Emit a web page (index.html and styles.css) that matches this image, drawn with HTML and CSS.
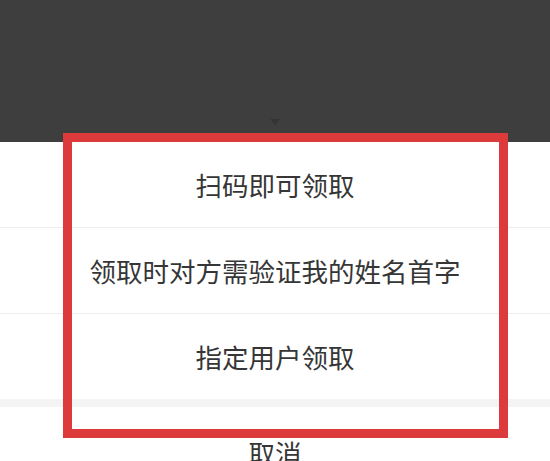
FILE: index.html
```html
<!DOCTYPE html>
<html lang="zh">
<head>
<meta charset="utf-8">
<link rel="stylesheet" href="styles.css">
</head>
<body>
<div class="screen">
  <div class="mask">
    <span class="caret"></span>
  </div>
  <div class="sheet">
    <div class="row line">扫码即可领取</div>
    <div class="row line">领取时对方需验证我的姓名首字</div>
    <div class="row">指定用户领取</div>
    <div class="gap"></div>
    <div class="row cancel">取消</div>
  </div>
  <div class="highlight"></div>
</div>
</body>
</html>
```
FILE: styles.css
```css
html, body {
  margin: 0;
  padding: 0;
  background: #ffffff;
}
.screen {
  position: relative;
  width: 550px;
  height: 461px;
  overflow: hidden;
  font-family: "Noto Sans CJK SC", "Noto Sans", sans-serif;
}
.mask {
  height: 142px;
  background: #3e3e3e;
  display: flex;
  justify-content: center;
  align-items: flex-end;
}
.caret {
  width: 0;
  height: 0;
  margin-bottom: 17px;
  border-left: 5px solid transparent;
  border-right: 5px solid transparent;
  border-top: 6px solid #343434;
}
.sheet {
  display: flex;
  flex-direction: column;
}
.row {
  height: 85px;
  display: flex;
  align-items: center;
  justify-content: center;
  font-size: 26.5px;
  color: #363636;
  background: #ffffff;
}
.line {
  border-bottom: 1.5px solid #eeeeee;
}
.gap {
  height: 8px;
  background: #f4f4f4;
}
.cancel {
  height: 90px;
}
.highlight {
  position: absolute;
  left: 63px;
  top: 133px;
  width: 445px;
  height: 305px;
  box-sizing: border-box;
  border: 9px solid #dd3b3b;
}
```
